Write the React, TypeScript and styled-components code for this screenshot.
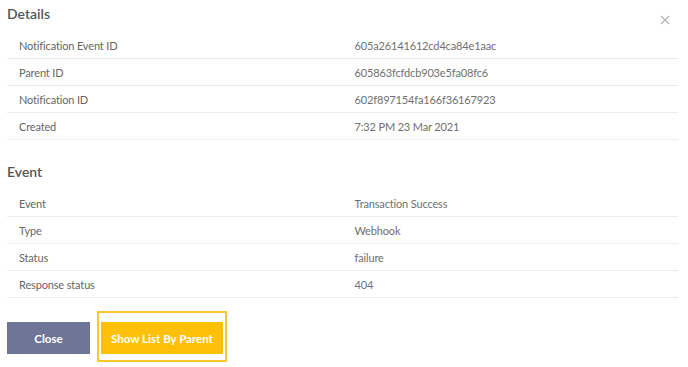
import styled, { createGlobalStyle } from "styled-components";

const GlobalStyle = createGlobalStyle`
  body {
    margin: 0;
    background: #ffffff;
    font-family: Lato, "Open Sans", sans-serif;
  }
`;

const Modal = styled.div`
  width: 688px;
  box-sizing: border-box;
  padding: 0 10px 0 7px;
`;

const Section = styled.section`
  & + & {
    margin-top: 18px;
  }
`;

const Header = styled.div`
  display: flex;
  justify-content: space-between;
  align-items: flex-start;
  margin-bottom: 4px;
`;

const Title = styled.h3`
  margin: 0;
  font-size: 14px;
  line-height: 28px;
  font-weight: 600;
  color: #555555;
`;

const CloseIcon = styled.button`
  margin: 15px 8px 0 0;
  padding: 0;
  border: none;
  background: none;
  width: 10px;
  height: 10px;
  display: flex;
  cursor: pointer;
`;

const Table = styled.div`
  display: flex;
  flex-direction: column;
`;

const Row = styled.div`
  display: grid;
  grid-template-columns: 1fr 1fr;
  height: 26px;
  align-items: center;
  border-bottom: 1px solid #ececec;
`;

const Cell = styled.span`
  padding: 0 12px;
  font-size: 11px;
  letter-spacing: -0.15px;
  color: ${(props) => (props.color ? props.color : "#666666")};
`;

const Actions = styled.div`
  display: flex;
  align-items: flex-end;
  gap: 7px;
  margin-top: 13px;
`;

const Button = styled.button`
  height: 32px;
  border: none;
  border-radius: 0;
  padding: 0;
  font-family: inherit;
  font-size: 11.5px;
  font-weight: 700;
  color: #ffffff;
  cursor: pointer;
`;

const CloseButton = styled(Button)`
  width: 83px;
  margin-bottom: 8px;
  background: #6f7597;
`;

const FocusRing = styled.div`
  padding: 9px 2px 6px;
  border: 2px solid #fcc62e;
`;

const ParentButton = styled(Button)`
  width: 122px;
  background: #ffc107;
  display: block;
`;

const details = [
  ["Notification Event ID", "605a26141612cd4ca84e1aac"],
  ["Parent ID", "605863fcfdcb903e5fa08fc6"],
  ["Notification ID", "602f897154fa166f36167923"],
  ["Created", "7:32 PM 23 Mar 2021"],
];

const event = [
  ["Event", "Transaction Success"],
  ["Type", "Webhook"],
  ["Status", "failure"],
  ["Response status", "404"],
];

function InfoTable({ rows }: { rows: string[][] }) {
  return (
    <Table>
      {rows.map(([label, value]) => (
        <Row key={label}>
          <Cell>{label}</Cell>
          <Cell color="#707070">{value}</Cell>
        </Row>
      ))}
    </Table>
  );
}

export default function App() {
  return (
    <>
      <GlobalStyle />
      <Modal>
        <Section>
          <Header>
            <Title>Details</Title>
            <CloseIcon aria-label="close">
              <svg width="10" height="10" viewBox="0 0 10 10">
                <path
                  d="M1 1L9 9M9 1L1 9"
                  stroke="#b5b5b5"
                  strokeWidth="1.2"
                  fill="none"
                />
              </svg>
            </CloseIcon>
          </Header>
          <InfoTable rows={details} />
        </Section>
        <Section>
          <Header>
            <Title>Event</Title>
          </Header>
          <InfoTable rows={event} />
        </Section>
        <Actions>
          <CloseButton>Close</CloseButton>
          <FocusRing>
            <ParentButton>Show List By Parent</ParentButton>
          </FocusRing>
        </Actions>
      </Modal>
    </>
  );
}
